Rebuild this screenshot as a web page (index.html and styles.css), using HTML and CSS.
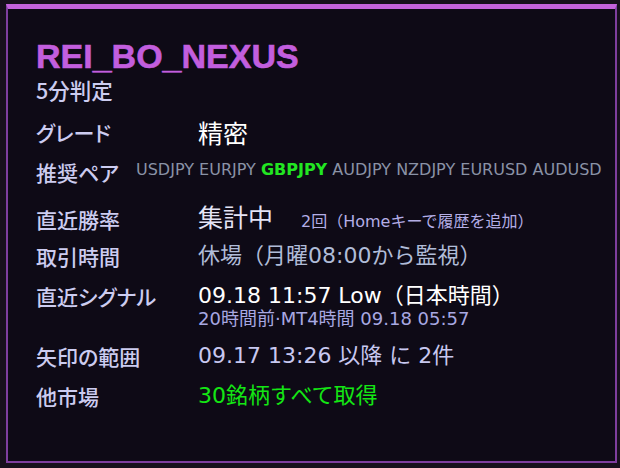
FILE: index.html
```html
<!DOCTYPE html>
<html lang="ja">
<head>
<meta charset="utf-8">
<link rel="stylesheet" href="styles.css">
</head>
<body>
<div class="panel">
  <div class="title">REI_BO_NEXUS</div>
  <div class="subtitle">5分判定</div>
  <div class="rows">
    <div class="row r-grade">
      <div class="label">グレード</div>
      <div class="value big white">精密</div>
    </div>
    <div class="row r-pairs">
      <div class="label">推奨ペア</div>
      <div class="value pairs">USDJPY EURJPY <b class="hot">GBPJPY</b> AUDJPY NZDJPY EURUSD AUDUSD</div>
    </div>
    <div class="row r-rate">
      <div class="label">直近勝率</div>
      <div class="value"><span class="big agg">集計中</span><span class="hint">2回（Homeキーで履歴を追加）</span></div>
    </div>
    <div class="row">
      <div class="label">取引時間</div>
      <div class="value dim">休場（月曜08:00から監視）</div>
    </div>
    <div class="row r-signal">
      <div class="label">直近シグナル</div>
      <div class="value stack">
        <div class="main white">09.18 11:57 Low（日本時間）</div>
        <div class="sub">20時間前·MT4時間 09.18 05:57</div>
      </div>
    </div>
    <div class="row r-range">
      <div class="label">矢印の範囲</div>
      <div class="value lav">09.17 13:26 以降 に 2件</div>
    </div>
    <div class="row">
      <div class="label">他市場</div>
      <div class="value green">30銘柄すべて取得</div>
    </div>
  </div>
</div>
</body>
</html>
```

FILE: styles.css
```css
html, body {
  margin: 0;
  padding: 0;
  background: #17101c;
  width: 620px;
  height: 468px;
  overflow: hidden;
}

.panel {
  box-sizing: border-box;
  margin: 4px 0 0 6px;
  width: 611px;
  height: 459px;
  background: #0e0a16;
  border-top: 5px solid #c462dc;
  border-left: 2px solid #7e3e9e;
  border-right: 2px solid #7e3e9e;
  border-bottom: 2px solid #7e3e9e;
  padding: 29px 0 0 28px;
  font-family: "DejaVu Sans", "Noto Sans CJK JP", sans-serif;
  color: #ccccf0;
}

.title {
  font-family: "Liberation Sans", Arial, sans-serif;
  font-weight: bold;
  font-size: 34px;
  line-height: 37px;
  color: #c25ede;
  -webkit-text-stroke: 0.6px #c25ede;
}

.subtitle {
  font-family: "Noto Sans CJK JP", sans-serif;
  font-size: 21.5px;
  font-weight: 500;
  line-height: 28px;
  margin-top: 1px;
  color: #ccccf0;
}

.rows {
  margin-top: 8px;
}

.row {
  display: grid;
  grid-template-columns: 162px 1fr;
  align-items: center;
  height: 40px;
}

.r-rate {
  margin-top: 4px;
}

.label {
  font-family: "Noto Sans CJK JP", sans-serif;
  font-size: 21px;
  font-weight: 500;
  line-height: 40px;
  font-feature-settings: "palt";
  color: #ccccf0;
}

.value {
  font-size: 22px;
  line-height: 40px;
  white-space: nowrap;
}

.big {
  font-family: "Noto Sans CJK JP", sans-serif;
  font-size: 25px;
}

.white { color: #ffffff; }
.agg { color: #e4e4f6; }
.dim { color: #b0bcd8; }
.lav { color: #c8c8f0; }
.green { color: #14e614; }

.hint {
  font-size: 16px;
  color: #b4aee6;
  margin-left: 28px;
}

.pairs {
  font-size: 16px;
  color: #8a92a6;
  margin-left: -62px;
  margin-top: -4px;
}

.hot {
  color: #22e622;
  font-weight: bold;
}

.r-signal {
  align-items: start;
  height: auto;
}

.stack {
  display: flex;
  flex-direction: column;
}

.main {
  line-height: 40px;
}

.sub {
  font-size: 18px;
  line-height: 18px;
  margin-top: -6px;
  color: #a8a8e2;
}

.r-range {
  margin-top: 8px;
}
```
